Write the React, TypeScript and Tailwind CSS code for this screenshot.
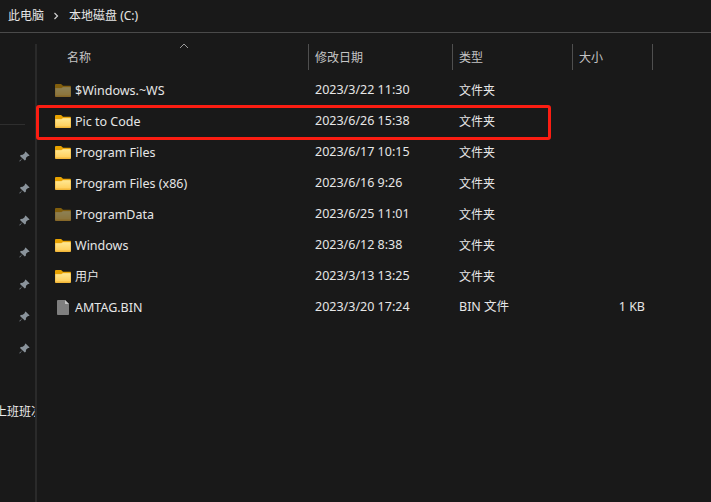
const FONT = "font-['Noto_Sans','Noto_Sans_CJK_SC',sans-serif]"

type FileRow = {
  name: string
  date: string
  type: string
  size?: string
  icon: 'folder' | 'hidden' | 'file'
}

const ROWS: FileRow[] = [
  { name: '$Windows.~WS', date: '2023/3/22 11:30', type: '文件夹', icon: 'hidden' },
  { name: 'Pic to Code', date: '2023/6/26 15:38', type: '文件夹', icon: 'folder' },
  { name: 'Program Files', date: '2023/6/17 10:15', type: '文件夹', icon: 'folder' },
  { name: 'Program Files (x86)', date: '2023/6/16 9:26', type: '文件夹', icon: 'folder' },
  { name: 'ProgramData', date: '2023/6/25 11:01', type: '文件夹', icon: 'hidden' },
  { name: 'Windows', date: '2023/6/12 8:38', type: '文件夹', icon: 'folder' },
  { name: '用户', date: '2023/3/13 13:25', type: '文件夹', icon: 'folder' },
  { name: 'AMTAG.BIN', date: '2023/3/20 17:24', type: 'BIN 文件', size: '1 KB', icon: 'file' },
]

function FolderIcon({ dim }: { dim?: boolean }) {
  return (
    <svg width="16" height="13" viewBox="0 0 16 14" preserveAspectRatio="none" className={dim ? 'mb-px opacity-50' : 'mb-px'}>
      <defs>
        <linearGradient id="folderBody" x1="0" y1="0" x2="0" y2="1">
          <stop offset="0" stopColor="#ffe893" />
          <stop offset="1" stopColor="#ffcf5c" />
        </linearGradient>
      </defs>
      <path d="M0 1.200C0 .5.5 0 1.200 0h4.200c.4 0 .7.1 1 .4L8 2h6.800c.7 0 1.200.5 1.200 1.200V5H0z" fill="#e8a200" />
      <path d="M0 4.200h6.200L8 3h6.800c.7 0 1.200.5 1.200 1.200v8.600c0 .7-.5 1.200-1.200 1.200H1.200C.5 14 0 13.500 0 12.800z" fill="#f2b73a" />
      <path d="M.5 4.700h5.900L8.100 3.500h6.700c.4 0 .7.3.7.7v8.300H.5z" fill="url(#folderBody)" />
    </svg>
  )
}

function FileIcon() {
  return (
    <svg width="12" height="15" viewBox="0 0 12 15">
      <path d="M0 .8C0 .4.4 0 .8 0H8l4 4v10.200c0 .4-.4.8-.8.8H.8c-.4 0-.8-.4-.8-.8z" fill="#7f7f7f" />
      <path d="M8 0l4 4H8.600C8.300 4 8 3.700 8 3.400z" fill="#c4c4c4" />
    </svg>
  )
}

function PinIcon() {
  return (
    <svg width="11" height="11" viewBox="0 0 11 11">
      <path d="M6.600.4l4 4-.9.7-.7-.2L7 6.800l-.2 2-1 .7L3.400 7.200.9 10.600l-.6-.5 3-2.800L1 5l.7-1 2-.2L5.900 2l-.1-.8z" fill="#8a939b" />
    </svg>
  )
}

function Sidebar() {
  return (
    <div className="flex w-[37px] shrink-0 flex-col overflow-hidden border-r-2 border-[#2a2a2a]">
      <div className="mt-[80px] h-px w-[25px] bg-[#2e2e2e]" />
      <div className="mt-[26px] flex flex-col gap-[21px] pl-[19px]">
        {Array.from({ length: 7 }, (_, index) => (
          <PinIcon key={index} />
        ))}
      </div>
      <div className="mt-[50px] w-[35px] overflow-hidden text-[12px] leading-[16px] whitespace-nowrap text-[#ececec]">
        <span className="ml-[-5px] inline-block">上班班次</span>
      </div>
    </div>
  )
}

function HeaderCell({ label, className }: { label: string; className: string }) {
  return (
    <div className={`flex h-[26px] items-center border-r border-[#4f4f4f] pt-[2px] text-[12px] text-[#c4c4c4] ${className}`}>
      {label}
    </div>
  )
}

function Row({ row }: { row: FileRow }) {
  return (
    <div className="grid h-[31px] grid-cols-[272px_144px_120px_80px] items-center text-[12.5px] text-[#e6e6e6]">
      <div className="flex items-center">
        <div className="flex w-[38px] justify-end pr-[4px]">
          <div className="flex w-[16px] justify-center">
            {row.icon === 'file' ? <FileIcon /> : <FolderIcon dim={row.icon === 'hidden'} />}
          </div>
        </div>
        <span className={row.name === '用户' ? 'text-[12px]' : 'pt-px'}>{row.name}</span>
      </div>
      <span className="pl-[6px]">{row.date}</span>
      <span className={row.size ? 'pl-[6px]' : 'pl-[6px] text-[12px]'}>{row.type}</span>
      <span className="pr-[8px] text-right">{row.size}</span>
    </div>
  )
}

export default function App() {
  return (
    <div className={`flex h-[502px] w-[711px] flex-col overflow-hidden bg-[#191919] ${FONT}`}>
      {/* Breadcrumb */}
      <div className="flex h-[33px] shrink-0 items-center border-b border-[#4a4a4a] pl-[8px] text-[12px] text-[#e6e6e6]">
        <span>此电脑</span>
        <svg width="6" height="8" viewBox="0 0 6 8" className="mr-[10px] ml-[9px]">
          <path d="M1.500 1l3 3-3 3" fill="none" stroke="#d0d0d0" strokeWidth="1.200" />
        </svg>
        <span>本地磁盘 (C:)</span>
      </div>

      <div className="flex flex-1 pt-[11px]">
        <Sidebar />

        {/* File list */}
        <div className="relative flex-1">
          <div className="grid grid-cols-[272px_144px_120px_80px]">
            <HeaderCell label="名称" className="pl-[30px]" />
            <HeaderCell label="修改日期" className="pl-[6px]" />
            <HeaderCell label="类型" className="pl-[6px]" />
            <HeaderCell label="大小" className="pl-[6px]" />
          </div>
          <svg width="10" height="6" viewBox="0 0 10 6" className="absolute top-[-1px] left-[142px]">
            <path d="M1 5l4-4 4 4" fill="none" stroke="#9a9a9a" strokeWidth="1" />
          </svg>

          <div className="mt-[5px]">
            {ROWS.map((row) => (
              <Row key={row.name} row={row} />
            ))}
          </div>

          {/* Red highlight around the row */}
          <div className="absolute top-[61px] left-[-1px] h-[35px] w-[515px] rounded-[3px] border-[3px] border-[#fb1d12]" />
        </div>
      </div>
    </div>
  )
}
